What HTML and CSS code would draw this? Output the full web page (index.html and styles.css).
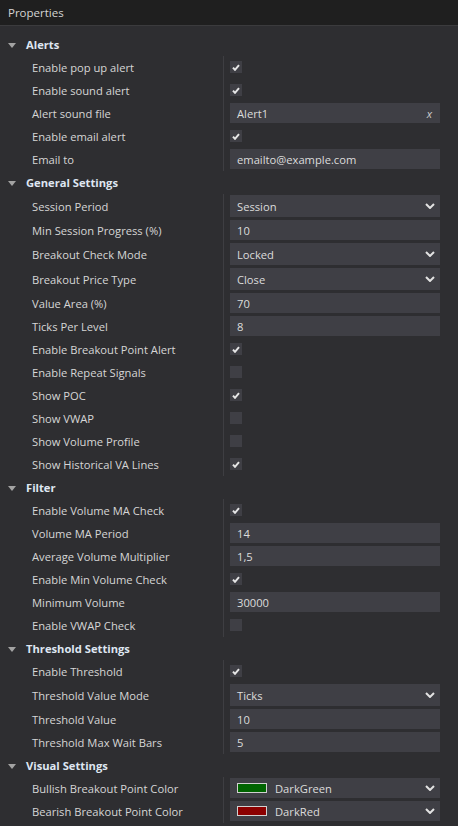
FILE: index.html
```html
<!DOCTYPE html>
<html>
<head>
<meta charset="utf-8">
<link rel="stylesheet" href="styles.css">
</head>
<body>
<div class="panel">
  <div class="titlebar">Properties</div>
  <div class="grid">
    <div class="cat"><span class="tri"></span>Alerts</div>
    <div class="row"><div class="label">Enable pop up alert</div><div class="val"><span class="cb on"><svg viewBox="0 0 8 7"><path d="M1 3.6 L3 5.8 L7 1.2"/></svg></span></div></div>
    <div class="row"><div class="label">Enable sound alert</div><div class="val"><span class="cb on"><svg viewBox="0 0 8 7"><path d="M1 3.6 L3 5.8 L7 1.2"/></svg></span></div></div>
    <div class="row"><div class="label">Alert sound file</div><div class="val"><div class="box"><span class="txt">Alert1</span><span class="clear">x</span></div></div></div>
    <div class="row"><div class="label">Enable email alert</div><div class="val"><span class="cb on"><svg viewBox="0 0 8 7"><path d="M1 3.6 L3 5.8 L7 1.2"/></svg></span></div></div>
    <div class="row"><div class="label">Email to</div><div class="val"><div class="box"><span class="txt">emailto@example.com</span></div></div></div>

    <div class="cat"><span class="tri"></span>General Settings</div>
    <div class="row tall"><div class="label">Session Period</div><div class="val"><div class="box dd"><span class="txt">Session</span><svg class="chev" viewBox="0 0 10 6"><path d="M1 1 L5 5 L9 1"/></svg></div></div></div>
    <div class="row"><div class="label">Min Session Progress (%)</div><div class="val"><div class="box"><span class="txt">10</span></div></div></div>
    <div class="row tall"><div class="label">Breakout Check Mode</div><div class="val"><div class="box dd"><span class="txt">Locked</span><svg class="chev" viewBox="0 0 10 6"><path d="M1 1 L5 5 L9 1"/></svg></div></div></div>
    <div class="row tall"><div class="label">Breakout Price Type</div><div class="val"><div class="box dd"><span class="txt">Close</span><svg class="chev" viewBox="0 0 10 6"><path d="M1 1 L5 5 L9 1"/></svg></div></div></div>
    <div class="row"><div class="label">Value Area (%)</div><div class="val"><div class="box"><span class="txt">70</span></div></div></div>
    <div class="row"><div class="label">Ticks Per Level</div><div class="val"><div class="box"><span class="txt">8</span></div></div></div>
    <div class="row"><div class="label">Enable Breakout Point Alert</div><div class="val"><span class="cb on"><svg viewBox="0 0 8 7"><path d="M1 3.6 L3 5.8 L7 1.2"/></svg></span></div></div>
    <div class="row"><div class="label">Enable Repeat Signals</div><div class="val"><span class="cb"></span></div></div>
    <div class="row"><div class="label">Show POC</div><div class="val"><span class="cb on"><svg viewBox="0 0 8 7"><path d="M1 3.6 L3 5.8 L7 1.2"/></svg></span></div></div>
    <div class="row"><div class="label">Show VWAP</div><div class="val"><span class="cb"></span></div></div>
    <div class="row"><div class="label">Show Volume Profile</div><div class="val"><span class="cb"></span></div></div>
    <div class="row"><div class="label">Show Historical VA Lines</div><div class="val"><span class="cb on"><svg viewBox="0 0 8 7"><path d="M1 3.6 L3 5.8 L7 1.2"/></svg></span></div></div>

    <div class="cat"><span class="tri"></span>Filter</div>
    <div class="row"><div class="label">Enable Volume MA Check</div><div class="val"><span class="cb on"><svg viewBox="0 0 8 7"><path d="M1 3.6 L3 5.8 L7 1.2"/></svg></span></div></div>
    <div class="row"><div class="label">Volume MA Period</div><div class="val"><div class="box"><span class="txt">14</span></div></div></div>
    <div class="row"><div class="label">Average Volume Multiplier</div><div class="val"><div class="box"><span class="txt">1,5</span></div></div></div>
    <div class="row"><div class="label">Enable Min Volume Check</div><div class="val"><span class="cb on"><svg viewBox="0 0 8 7"><path d="M1 3.6 L3 5.8 L7 1.2"/></svg></span></div></div>
    <div class="row"><div class="label">Minimum Volume</div><div class="val"><div class="box"><span class="txt">30000</span></div></div></div>
    <div class="row"><div class="label">Enable VWAP Check</div><div class="val"><span class="cb"></span></div></div>

    <div class="cat"><span class="tri"></span>Threshold Settings</div>
    <div class="row"><div class="label">Enable Threshold</div><div class="val"><span class="cb on"><svg viewBox="0 0 8 7"><path d="M1 3.6 L3 5.8 L7 1.2"/></svg></span></div></div>
    <div class="row tall"><div class="label">Threshold Value Mode</div><div class="val"><div class="box dd"><span class="txt">Ticks</span><svg class="chev" viewBox="0 0 10 6"><path d="M1 1 L5 5 L9 1"/></svg></div></div></div>
    <div class="row"><div class="label">Threshold Value</div><div class="val"><div class="box"><span class="txt">10</span></div></div></div>
    <div class="row"><div class="label">Threshold Max Wait Bars</div><div class="val"><div class="box"><span class="txt">5</span></div></div></div>

    <div class="cat"><span class="tri"></span>Visual Settings</div>
    <div class="row"><div class="label">Bullish Breakout Point Color</div><div class="val"><div class="box"><span class="swatch green"></span><span class="txt">DarkGreen</span><svg class="chev" viewBox="0 0 10 6"><path d="M1 1 L5 5 L9 1"/></svg></div></div></div>
    <div class="row"><div class="label">Bearish Breakout Point Color</div><div class="val"><div class="box"><span class="swatch red"></span><span class="txt">DarkRed</span><svg class="chev" viewBox="0 0 10 6"><path d="M1 1 L5 5 L9 1"/></svg></div></div></div>
  </div>
</div>
</body>
</html>
```
FILE: styles.css
```css
html, body {
  margin: 0;
  padding: 0;
  background: #2e2e31;
}
body {
  font-family: "Open Sans", "Noto Sans", sans-serif;
  font-size: 11.2px;
  color: #d6d6d6;
  width: 458px;
  height: 826px;
  overflow: hidden;
}
.panel {
  display: flex;
  flex-direction: column;
}
.titlebar {
  height: 25px;
  background: #1f1f1f;
  border-bottom: 1px solid #3b3b3d;
  display: flex;
  align-items: center;
  padding-left: 8px;
  font-size: 11.5px;
  color: #d4d4d4;
}
.grid {
  display: flex;
  flex-direction: column;
  padding-top: 7px;
}
.cat {
  height: 23px;
  display: flex;
  align-items: center;
  font-weight: 700;
  color: #dfe6f1;
  padding-left: 8px;
}
.tri {
  width: 0;
  height: 0;
  border-left: 4.5px solid transparent;
  border-right: 4.5px solid transparent;
  border-top: 5px solid #a3a3a3;
  margin-right: 10px;
  margin-top: 1px;
}
.row {
  height: 23px;
  display: flex;
}
.row.tall {
  height: 25px;
}
.label {
  width: 224px;
  flex: none;
  box-sizing: border-box;
  padding-left: 32px;
  display: flex;
  align-items: center;
  border-right: 1px solid #3e3e42;
  color: #d6d6d6;
}
.val {
  flex: 1;
  display: flex;
  align-items: center;
  padding-left: 6px;
  padding-bottom: 1px;
}
.cb {
  width: 12px;
  height: 12px;
  background: #3f3f45;
  display: flex;
  align-items: center;
  justify-content: center;
}
.cb svg {
  width: 8px;
  height: 7px;
}
.cb svg path {
  fill: none;
  stroke: #e6e6e6;
  stroke-width: 2;
}
.box {
  width: 210px;
  height: 20px;
  background: #3f3f45;
  display: flex;
  align-items: center;
  box-sizing: border-box;
  padding-left: 7px;
  padding-right: 5px;
  color: #dcdcdc;
}
.box.dd {
  height: 22px;
}
.txt {
  flex: 1;
}
.clear {
  font-style: italic;
  color: #cfcfcf;
  margin-right: 3px;
  font-size: 11px;
}
.chev {
  width: 10px;
  height: 6px;
  margin-right: 0;
}
.chev path {
  fill: none;
  stroke: #e2e2e2;
  stroke-width: 2;
}
.swatch {
  width: 30px;
  height: 10px;
  box-sizing: border-box;
  border: 1px solid #d0d0d0;
  margin-right: 8px;
}
.swatch.green {
  background: #006400;
}
.swatch.red {
  background: #8b0000;
}
```
